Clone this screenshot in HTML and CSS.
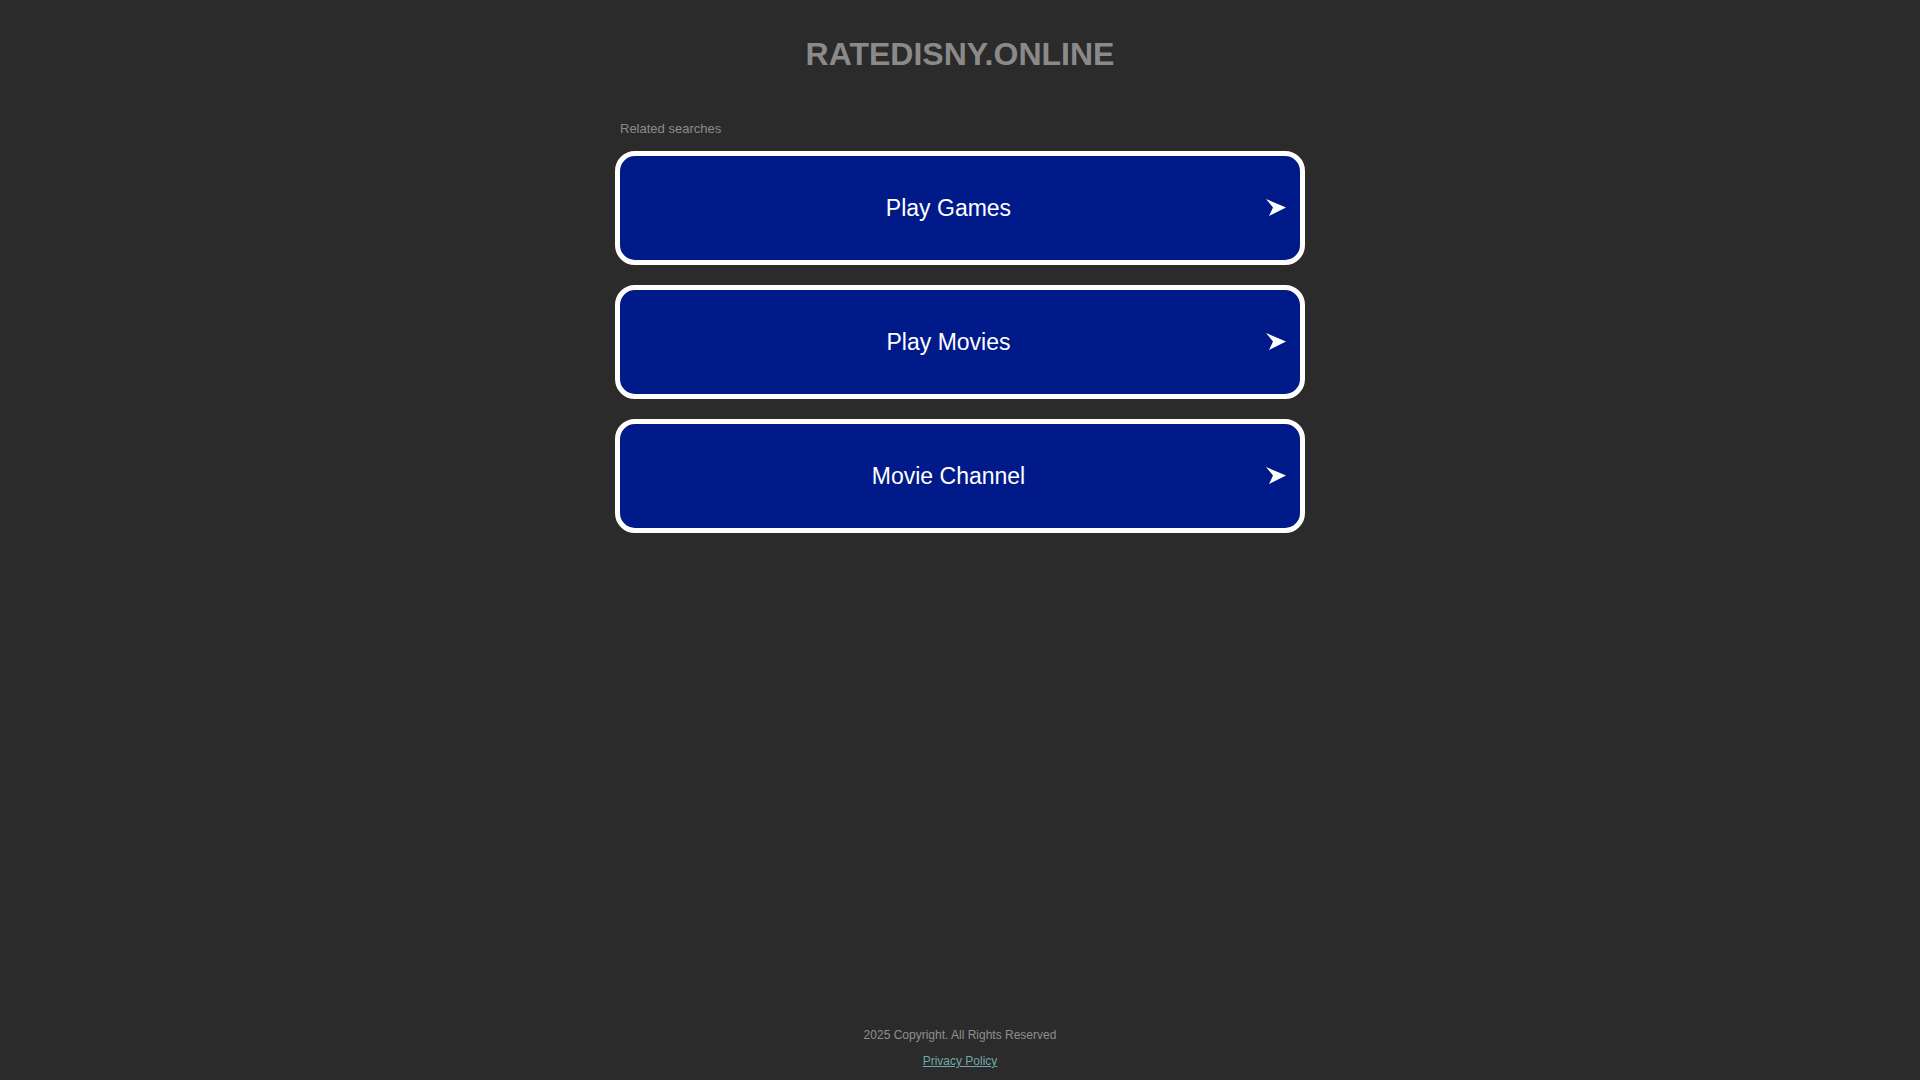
FILE: index.html
```html
<!DOCTYPE html>
<html lang="en">
<head>
<meta charset="utf-8">
<title>ratedisny.online</title>
<link rel="stylesheet" href="styles.css">
</head>
<body>
<div class="page">
  <header class="header">
    <h1 class="domain">RATEDISNY.ONLINE</h1>
  </header>
  <main class="related">
    <p class="related-title">Related searches</p>
    <ul class="links">
      <li><a class="link" href="#"><span class="link-text">Play Games</span><svg class="arrow" viewBox="0 0 20 17" width="20" height="17"><polygon points="0,0 20,8.5 3,17 7,8.5" fill="#ffffff"/></svg></a></li>
      <li><a class="link" href="#"><span class="link-text">Play Movies</span><svg class="arrow" viewBox="0 0 20 17" width="20" height="17"><polygon points="0,0 20,8.5 3,17 7,8.5" fill="#ffffff"/></svg></a></li>
      <li><a class="link" href="#"><span class="link-text">Movie Channel</span><svg class="arrow" viewBox="0 0 20 17" width="20" height="17"><polygon points="0,0 20,8.5 3,17 7,8.5" fill="#ffffff"/></svg></a></li>
    </ul>
  </main>
  <footer class="footer">
    <p class="copyright">2025 Copyright. All Rights Reserved</p>
    <p class="privacy"><a href="#">Privacy Policy</a></p>
  </footer>
</div>
</body>
</html>
```
FILE: styles.css
```css
html, body {
  margin: 0;
  padding: 0;
}
body {
  background: #2b2b2b;
  font-family: "Liberation Sans", Arial, sans-serif;
}
.page {
  min-height: 100vh;
  display: flex;
  flex-direction: column;
  box-sizing: border-box;
}
.header {
  padding-top: 36px;
  text-align: center;
}
.domain {
  margin: 0;
  font-size: 32px;
  font-weight: bold;
  color: #8a8a8a;
  line-height: normal;
}
.related {
  width: 690px;
  margin: 48px auto 0;
}
.related-title {
  margin: 0 0 15px 5px;
  font-size: 13px;
  color: #8c8c8c;
}
.links {
  list-style: none;
  margin: 0;
  padding: 0;
  display: flex;
  flex-direction: column;
  gap: 20px;
}
.link {
  position: relative;
  display: flex;
  align-items: center;
  justify-content: center;
  height: 114px;
  box-sizing: border-box;
  border: 5px solid #ffffff;
  border-radius: 20px;
  background: #011a8a;
  padding: 1px 23px 0 0;
  color: #ffffff;
  text-decoration: none;
  font-size: 23px;
}
.arrow {
  position: absolute;
  right: 14px;
  top: 50%;
  margin-top: -9px;
}
.footer {
  margin-top: auto;
  padding-bottom: 12px;
  text-align: center;
  font-size: 12px;
}
.copyright {
  margin: 0;
  color: #8f8f8f;
}
.privacy {
  margin: 12px 0 0;
}
.privacy a {
  color: #6fa9a9;
  text-decoration: underline;
}
```
